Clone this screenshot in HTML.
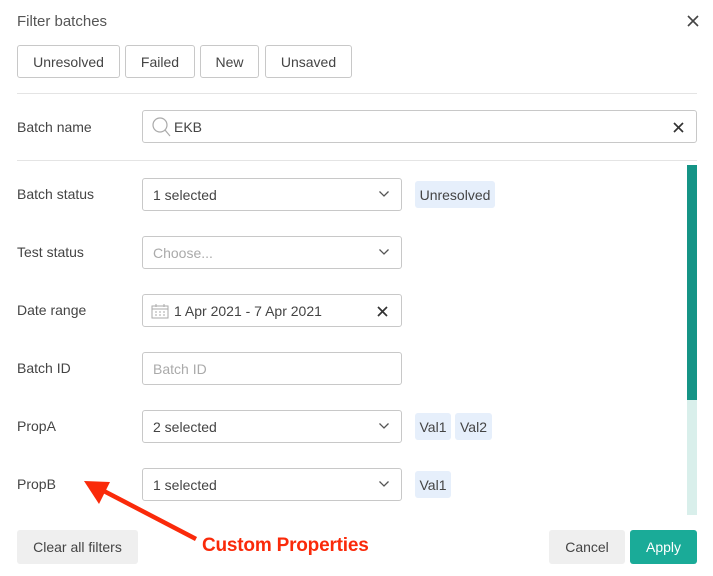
<!DOCTYPE html>
<html><head><meta charset="utf-8"><style>
*{box-sizing:border-box;margin:0;padding:0}
body{width:713px;height:576px;background:#fff;font-family:"Liberation Sans",sans-serif;font-size:14px;color:#444;position:relative;overflow:hidden}
.a{position:absolute}
.btn{position:absolute;border:1px solid #c8c8c8;border-radius:3px;height:33px;top:45px;display:flex;align-items:center;justify-content:center;color:#444;font-size:14px}
.hr{position:absolute;left:17px;width:680px;height:1px;background:#e4e4e4}
.lbl{position:absolute;left:17px;font-size:14px;color:#444}
.in{position:absolute;left:142px;width:260px;height:33px;border:1px solid #c8c8c8;border-radius:3px;display:flex;align-items:center;padding-left:10px;font-size:14px;color:#444}
.ph{color:#aaa}
.chev{position:absolute;right:11px;top:11px}
.tag{position:absolute;height:27px;background:#e6effb;border-radius:3px;font-size:14px;color:#444;display:flex;align-items:center;justify-content:center}
</style></head><body>
<div class="a" style="left:17px;top:13px;font-size:15px;color:#555">Filter batches</div>
<svg class="a" style="left:687px;top:15px" width="12" height="12" viewBox="0 0 12 12"><path d="M1 1L11 11M11 1L1 11" stroke="#444" stroke-width="1.6"/></svg>
<div class="btn" style="left:17px;width:103px">Unresolved</div>
<div class="btn" style="left:125px;width:70px">Failed</div>
<div class="btn" style="left:200px;width:59px">New</div>
<div class="btn" style="left:265px;width:87px">Unsaved</div>
<div class="hr" style="top:93px"></div>
<div class="lbl" style="top:119px">Batch name</div>
<div class="in" style="top:110px;width:555px;padding-left:8px">
<svg width="20" height="22" viewBox="0 0 20 22"><circle cx="9" cy="9" r="7" fill="none" stroke="#aaa" stroke-width="1.2"/><path d="M14 14L19 20" stroke="#aaa" stroke-width="1.2"/></svg><span style="margin-left:3px">EKB</span>
<svg class="a" style="right:12px;top:11px" width="11" height="11" viewBox="0 0 11 11"><path d="M1 1L10 10M10 1L1 10" stroke="#333" stroke-width="1.7"/></svg></div>
<div class="hr" style="top:160px"></div>
<div class="a" style="left:687px;top:165px;width:10px;height:235px;background:#159486"></div>
<div class="a" style="left:687px;top:400px;width:10px;height:115px;background:#d9efeb"></div>

<div class="lbl" style="top:186px">Batch status</div>
<div class="in" style="top:178px">1 selected<svg class="chev" width="12" height="8" viewBox="0 0 12 8"><path d="M1.5 1.5L6 6L10.5 1.5" fill="none" stroke="#555" stroke-width="1.3"/></svg></div>
<div class="tag" style="left:415px;top:181px;width:80px">Unresolved</div>

<div class="lbl" style="top:244px">Test status</div>
<div class="in" style="top:236px"><span class="ph">Choose...</span><svg class="chev" width="12" height="8" viewBox="0 0 12 8"><path d="M1.5 1.5L6 6L10.5 1.5" fill="none" stroke="#555" stroke-width="1.3"/></svg></div>

<div class="lbl" style="top:302px">Date range</div>
<div class="in" style="top:294px;padding-left:8px"><svg width="18" height="16" viewBox="0 0 18 16"><rect x="1" y="3" width="16" height="12" fill="none" stroke="#aaa"/><path d="M1 6H17M5 1V4M13 1V4M4 9H6M8 9H10M12 9H14M4 12H6M8 12H10M12 12H14" stroke="#aaa"/></svg><span style="margin-left:5px">1 Apr 2021 - 7 Apr 2021</span>
<svg class="a" style="right:13px;top:11px" width="11" height="11" viewBox="0 0 11 11"><path d="M1 1L10 10M10 1L1 10" stroke="#333" stroke-width="1.7"/></svg></div>

<div class="lbl" style="top:360px">Batch ID</div>
<div class="in" style="top:352px"><span class="ph">Batch ID</span></div>

<div class="lbl" style="top:418px">PropA</div>
<div class="in" style="top:410px">2 selected<svg class="chev" width="12" height="8" viewBox="0 0 12 8"><path d="M1.5 1.5L6 6L10.5 1.5" fill="none" stroke="#555" stroke-width="1.3"/></svg></div>
<div class="tag" style="left:415px;top:413px;width:36px">Val1</div>
<div class="tag" style="left:455px;top:413px;width:37px">Val2</div>

<div class="lbl" style="top:476px">PropB</div>
<div class="in" style="top:468px">1 selected<svg class="chev" width="12" height="8" viewBox="0 0 12 8"><path d="M1.5 1.5L6 6L10.5 1.5" fill="none" stroke="#555" stroke-width="1.3"/></svg></div>
<div class="tag" style="left:415px;top:471px;width:36px">Val1</div>

<div class="a" style="left:17px;top:530px;width:121px;height:34px;background:#efefef;border-radius:3px;display:flex;align-items:center;justify-content:center">Clear all filters</div>
<div class="a" style="left:549px;top:530px;width:76px;height:34px;background:#efefef;border-radius:3px;display:flex;align-items:center;justify-content:center">Cancel</div>
<div class="a" style="left:630px;top:530px;width:67px;height:34px;background:#1aab98;border-radius:3px;display:flex;align-items:center;justify-content:center;color:#fff">Apply</div>

<svg class="a" style="left:0;top:0" width="713" height="576"><path d="M196 539L100 489" stroke="#fa2a0a" stroke-width="4.5"/><path d="M84 481L110 482L99 504Z" fill="#fa2a0a"/></svg>
<div class="a" style="left:202px;top:535px;font-size:19px;font-weight:bold;color:#fa2a0a;letter-spacing:-0.2px">Custom Properties</div>
</body></html>
